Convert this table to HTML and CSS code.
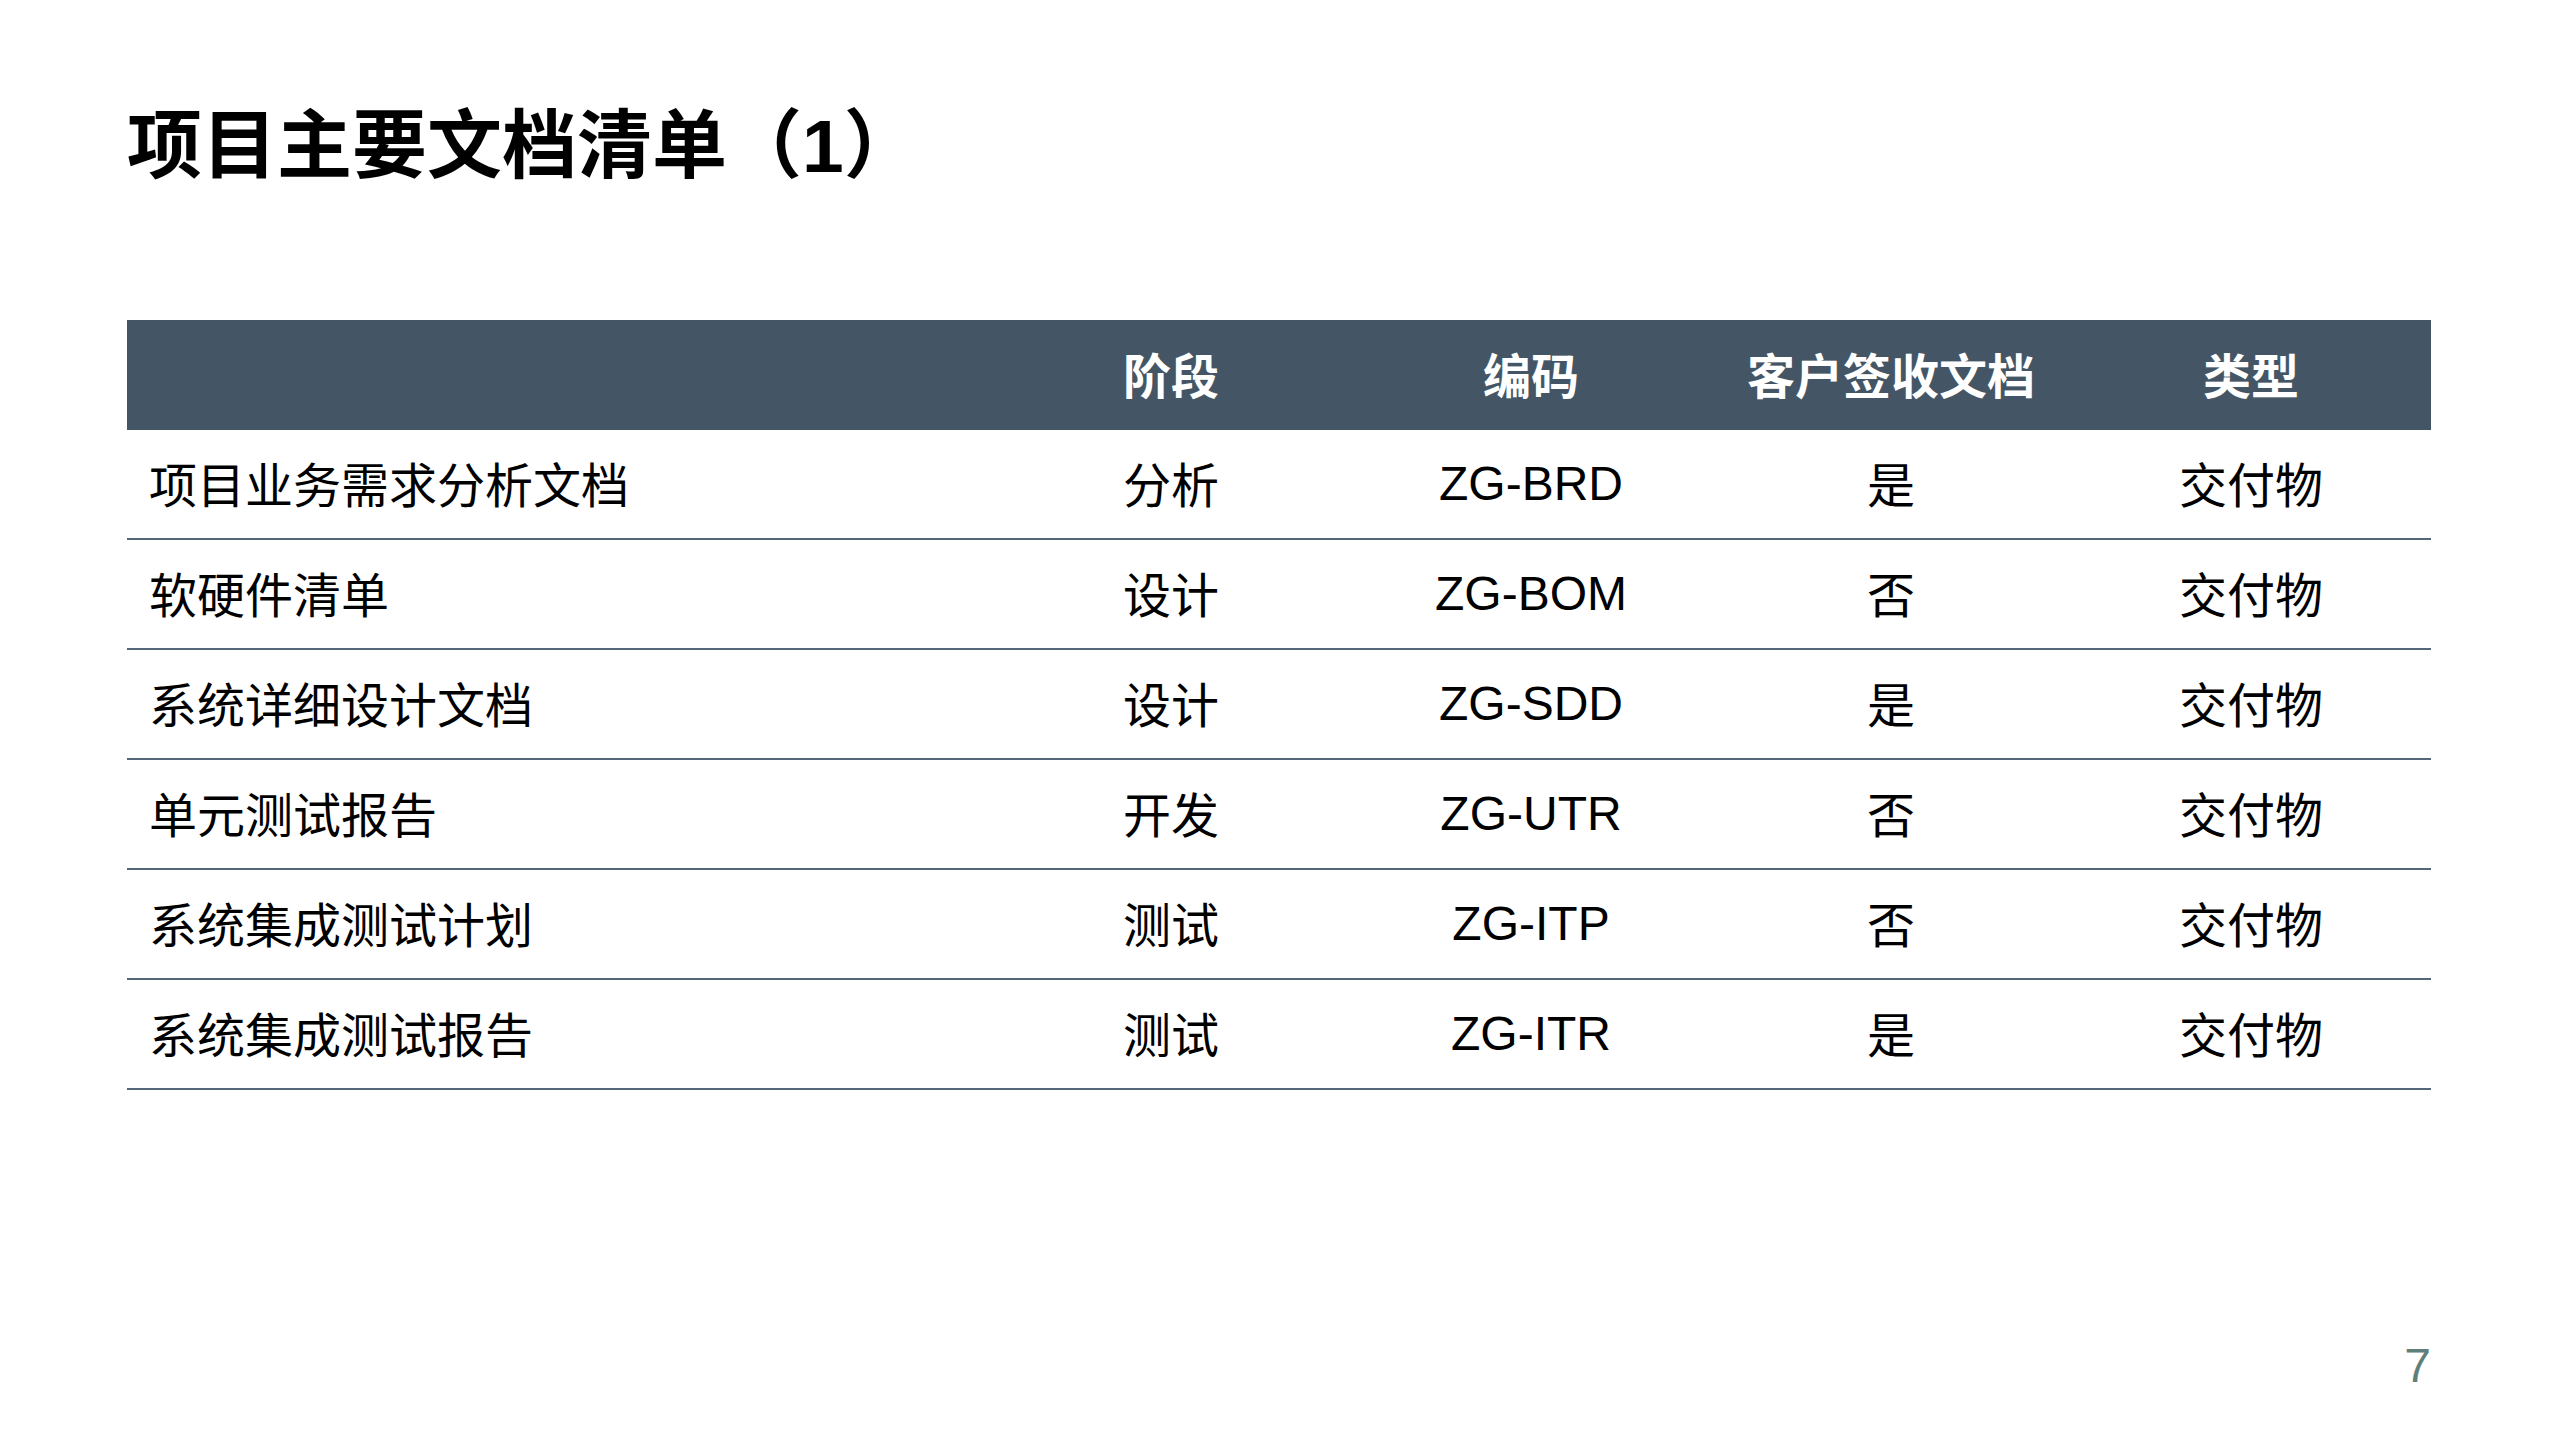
FILE: index.html
```html
<!DOCTYPE html>
<html lang="zh-CN">
<head>
<meta charset="utf-8">
<title>项目主要文档清单（1）</title>
<link rel="stylesheet" href="styles.css">
</head>
<body>
<div class="slide">
  <h1 class="title">项目主要文档清单（1）</h1>
  <div class="table">
    <div class="row head">
      <div class="cell name"></div>
      <div class="cell">阶段</div>
      <div class="cell">编码</div>
      <div class="cell">客户签收文档</div>
      <div class="cell">类型</div>
    </div>
    <div class="row">
      <div class="cell name">项目业务需求分析文档</div>
      <div class="cell">分析</div>
      <div class="cell code">ZG-BRD</div>
      <div class="cell">是</div>
      <div class="cell">交付物</div>
    </div>
    <div class="row">
      <div class="cell name">软硬件清单</div>
      <div class="cell">设计</div>
      <div class="cell code">ZG-BOM</div>
      <div class="cell">否</div>
      <div class="cell">交付物</div>
    </div>
    <div class="row">
      <div class="cell name">系统详细设计文档</div>
      <div class="cell">设计</div>
      <div class="cell code">ZG-SDD</div>
      <div class="cell">是</div>
      <div class="cell">交付物</div>
    </div>
    <div class="row">
      <div class="cell name">单元测试报告</div>
      <div class="cell">开发</div>
      <div class="cell code">ZG-UTR</div>
      <div class="cell">否</div>
      <div class="cell">交付物</div>
    </div>
    <div class="row">
      <div class="cell name">系统集成测试计划</div>
      <div class="cell">测试</div>
      <div class="cell code">ZG-ITP</div>
      <div class="cell">否</div>
      <div class="cell">交付物</div>
    </div>
    <div class="row">
      <div class="cell name">系统集成测试报告</div>
      <div class="cell">测试</div>
      <div class="cell code">ZG-ITR</div>
      <div class="cell">是</div>
      <div class="cell">交付物</div>
    </div>
  </div>
  <div class="footer"><span class="page-num">7</span></div>
</div>
</body>
</html>
```

FILE: styles.css
```css
html, body {
  margin: 0;
  padding: 0;
  background: #ffffff;
}

body {
  font-family: "Liberation Sans", "Noto Sans CJK SC", sans-serif;
  color: #000000;
}

.slide {
  width: 2560px;
  height: 1440px;
  box-sizing: border-box;
  padding: 101px 129px 0 127px;
  display: flex;
  flex-direction: column;
}

.title {
  margin: 0;
  padding-left: 0;
  font-size: 75px;
  line-height: 90px;
  font-weight: 700;
  color: #000000;
}

.table {
  margin-top: 129px;
  width: 2304px;
  display: flex;
  flex-direction: column;
}

.row {
  display: grid;
  grid-template-columns: 864px repeat(4, 360px);
  height: 110px;
  box-sizing: border-box;
  border-bottom: 2px solid #56667a;
  font-size: 48px;
}

.row.head {
  background: #445665;
  color: #ffffff;
  font-weight: 700;
  border-bottom: none;
}

.cell {
  display: flex;
  align-items: center;
  justify-content: center;
  white-space: nowrap;
  padding-bottom: 5px;
}

.cell.code {
  padding-bottom: 1px;
}

.cell.name {
  justify-content: flex-start;
  padding-left: 22px;
}

.footer {
  margin-top: auto;
  display: flex;
  justify-content: flex-end;
  padding-bottom: 46px;
}

.page-num {
  font-size: 48px;
  line-height: 56px;
  color: #5f7f7a;
}
```
